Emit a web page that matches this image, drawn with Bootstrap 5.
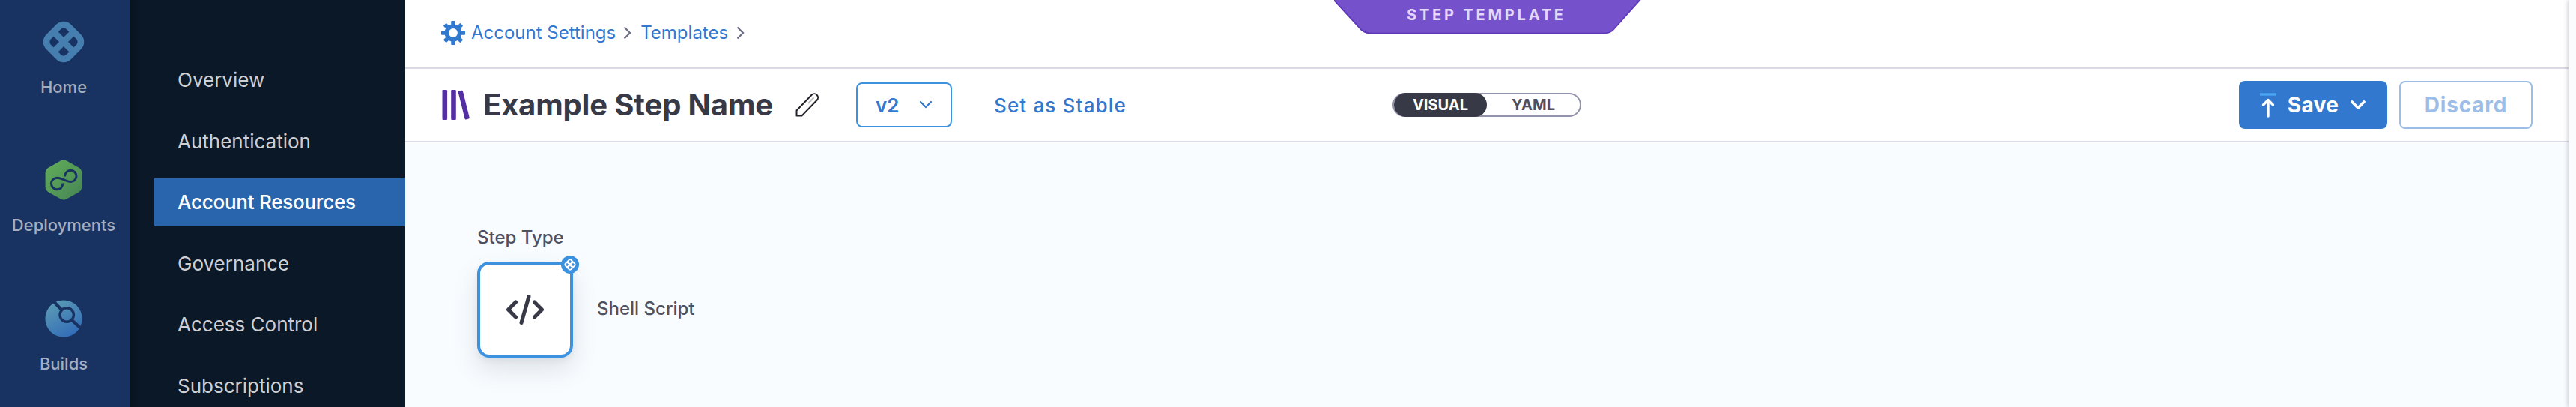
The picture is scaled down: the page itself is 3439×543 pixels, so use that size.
<!DOCTYPE html>
<html lang="en">
<head>
<meta charset="utf-8">
<title>Example Step Name</title>
<link href="https://cdn.jsdelivr.net/npm/bootstrap@5.3.0/dist/css/bootstrap.min.css" rel="stylesheet">
<style>
body{font-family:Inter,"Liberation Sans",sans-serif;font-optical-sizing:none;background:#fff;overflow:hidden;height:543px}
a{text-decoration:none}
svg{display:block;flex:none}
.rail{width:173px;padding-right:3px;background:#183361;z-index:1}
.rail a{height:184.4px;padding-top:26px;color:#a3adc0;font-size:22px;font-weight:500;line-height:28px}
.rail .glyph{height:60px;margin-bottom:16px}
.side{width:368px;background:linear-gradient(90deg,#08131f,#0a1828 16px);padding:74px 0 0 32px}
.side a{flex:none;height:65px;margin-bottom:16.6px;padding-left:32px;color:#cecfd2;font-size:26px;line-height:65px;border-radius:4px 0 0 4px}
.side a.active{background:#2865ac;color:#fff;font-weight:500;letter-spacing:-.25px}
.crumbs{height:92px;border-bottom:2px solid #d9dae5;padding:0 0 3px 48px;font-size:24px}
.crumbs a{color:#3278cf}
.ribbon{left:1240px;top:0;width:410px;height:46px;color:#e4d7fc;font-size:20px;font-weight:700;letter-spacing:3.8px}
.ribbon svg{position:absolute;left:0;top:0}
.ribbon span{position:absolute;left:97px;top:5px;line-height:30px}
.tools{height:98px;border-bottom:2px solid #d9dae5;padding-left:48px;padding-right:48px}
.title{font-size:40px;font-weight:650;color:#383946;margin:0 0 0 16px;width:417px;line-height:48px;letter-spacing:-.15px}
.ver{width:128px;height:60px;border:2px solid #3d92df;border-radius:8px;color:#3278cf;font-size:26px;font-weight:600;padding:0 24px;margin-left:49px}
.stable{margin-left:56px;color:#3278cf;font-size:26px;font-weight:500;letter-spacing:1.15px;width:532px}
.toggle{width:252px;height:32px;border:2px solid #9293ab;border-radius:16px;font-size:20px;font-weight:700;color:#4f5162}
.toggle .on{width:124px;height:32px;margin:-2px 0;border-radius:16px;background:#383946;color:#fff}
.act{height:64px;border-radius:8px;font-size:28px;font-weight:700;letter-spacing:.4px}
.save{width:198px;background:#3278cf;color:#fff;padding:0 28px}
.discard{width:178px;border:2px solid #9bbde8;color:#9bbde8;background:#fff;margin-left:16px;font-weight:650;letter-spacing:.8px}
.canvas{background:#f8fcff;padding:111px 0 0 96px;color:#4f5162;font-size:24px;font-weight:500}
.steplabel{line-height:32px;margin-bottom:16px}
.tile{width:128px;height:128px;border:4px solid #3d92df;border-radius:16px;background:#fff;box-shadow:0 16px 32px rgba(96,97,112,.16),0 4px 8px rgba(40,41,61,.06)}
.tile .pin{position:absolute;right:-12px;top:-12px}
.edge{width:10px;background:#fafbfc;box-shadow:0 0 6px rgba(40,41,61,.3);z-index:2}
</style>
<script src="https://cdn.jsdelivr.net/npm/bootstrap@5.3.0/dist/js/bootstrap.bundle.min.js"></script>
</head>
<body class="d-flex">
<nav class="rail flex-shrink-0 overflow-hidden">
  <a href="#" class="d-flex flex-column align-items-center">
    <span class="glyph d-flex align-items-center"><svg width="60" height="60" viewBox="0 0 60 60" fill="none" stroke="#477eb0" stroke-width="8.6"><rect x="11" y="11" width="38" height="38" rx="9.5" transform="rotate(45 30 30)"/><path d="M16.5 16.5l27 27M43.5 16.5l-27 27"/></svg></span>
    <span>Home</span></a>
  <a href="#" class="d-flex flex-column align-items-center">
    <span class="glyph d-flex align-items-center"><svg width="50" height="54" viewBox="0 0 50 54"><defs><linearGradient id="hexfill" x1="0" y1="0" x2="1" y2="1"><stop offset="0" stop-color="#62ae59"/><stop offset="1" stop-color="#468456"/></linearGradient></defs><path d="M21 1.5q4-2.2 8 0l16 9q4 2.3 4.4 7v19q-.4 4.700-4.400 7l-16 9q-4 2.200-8 0l-16-9q-4-2.300-4.400-7v-19q.4-4.700 4.400-7z" fill="url(#hexfill)"/><path d="M26.500 22.500C26.500 18 30 14.300 34.300 14.300c4.600 0 7.700 3.700 7.700 7.700s-3.100 7.600-7.700 7.600c-5.600 0-11.600-5.400-17.800-5.400-4.600 0-8 3.600-8 7.900s3.300 7.700 7.700 7.700c4.500 0 7.600-3.300 7.600-8.200" fill="none" stroke="#183361" stroke-width="3"/></svg></span>
    <span>Deployments</span></a>
  <a href="#" class="d-flex flex-column align-items-center">
    <span class="glyph d-flex align-items-center"><svg width="50" height="50" viewBox="0 0 50 50"><defs><linearGradient id="discfill" x1=".15" y1=".1" x2=".7" y2="1"><stop offset="0" stop-color="#5a99b4"/><stop offset="1" stop-color="#326cb8"/></linearGradient></defs><circle cx="25" cy="25" r="24.600" fill="url(#discfill)"/><g fill="none" stroke="#183361"><circle cx="29.200" cy="20" r="9.200" stroke-width="3.400"/><path d="M22.500 13.500L10.500 1M36 27l13 12" stroke-width="4.200"/></g></svg></span>
    <span>Builds</span></a>
</nav>
<nav class="side flex-shrink-0 overflow-hidden nav flex-column flex-nowrap">
  <a href="#">Overview</a><a href="#">Authentication</a><a href="#" class="active">Account Resources</a><a href="#">Governance</a><a href="#">Access Control</a><a href="#">Subscriptions</a>
</nav>
<main class="flex-grow-1 d-flex flex-column position-relative">
  <header class="crumbs d-flex align-items-center">
    <svg width="32" height="32" viewBox="-16 -16 32 32" fill="#3278cf"><circle r="8.700" fill="none" stroke="#3278cf" stroke-width="5.600"/><g id="teeth"><rect x="-2.800" y="-16" width="5.600" height="6.500" rx="1"/><rect x="-2.800" y="9.500" width="5.600" height="6.500" rx="1"/><rect x="-16" y="-2.800" width="6.500" height="5.600" rx="1"/><rect x="9.500" y="-2.800" width="6.500" height="5.600" rx="1"/></g><use href="#teeth" transform="rotate(45)"/></svg>
    <a href="#" class="ms-2">Account Settings</a>
    <svg style="margin-left:10px" width="11" height="18" viewBox="0 0 11 18" fill="none" stroke="#6b6d85" stroke-width="2.200"><path d="M1.500 1.500L9 9l-7.500 7.500"/></svg>
    <a href="#" style="margin-left:12px">Templates</a>
    <svg style="margin-left:11px" width="11" height="18" viewBox="0 0 11 18" fill="none" stroke="#6b6d85" stroke-width="2.200"><path d="M1.500 1.500L9 9l-7.500 7.500"/></svg>
  </header>
  <div class="ribbon position-absolute"><svg width="410" height="46" viewBox="0 0 410 46"><path d="M-4-4L36 39.500Q41.500 44.600 49 44.600H361Q368.500 44.600 373 39.500L412-4z" fill="#7551cc" stroke="#5f38b8" stroke-width="1.800"/></svg><span>STEP TEMPLATE</span></div>
  <section class="tools d-flex align-items-center">
    <svg width="40" height="40" viewBox="0 0 40 40" fill="#532fa3"><rect x="1.500" y="0" width="6.600" height="40" rx="1.300"/><rect x="13.200" y="0" width="6.600" height="40" rx="1.300"/><rect x="27" y=".6" width="6.400" height="39" rx="1.300" transform="rotate(-14 30.200 20)"/></svg>
    <h1 class="title text-nowrap">Example Step Name</h1>
    <svg width="32" height="32" viewBox="0 0 32 32" fill="none" stroke="#22222a" stroke-width="2"><path d="M1.500 23.500L21.600 2.800a4.800 4.800 0 0 1 7 7L8.500 30.500H1.500z" stroke-linejoin="round"/><path d="M17 14l7.500-7.700" stroke="#bbb"/></svg>
    <button class="ver bg-white d-flex align-items-center justify-content-between"><span>v2</span><svg width="18" height="12" viewBox="0 0 18 12" fill="none" stroke="#3278cf" stroke-width="2.200" stroke-linecap="round"><path d="M2 2l7 7 7-7"/></svg></button>
    <a href="#" class="stable text-nowrap">Set as Stable</a>
    <div class="toggle d-flex text-center align-items-center"><span class="on d-flex align-items-center justify-content-center">VISUAL</span><span class="flex-fill">YAML</span></div>
    <button class="act save ms-auto border-0 d-flex align-items-center justify-content-between"><svg width="22" height="34" viewBox="0 0 22 34" fill="none" stroke="#fff" stroke-width="3.400" stroke-linecap="round" stroke-linejoin="round"><path d="M0 3h22" stroke="#4aa5f0" stroke-linecap="butt"/><path d="M11 32V11M4.500 17l6.500-6.500 6.500 6.500"/></svg><span>Save</span><svg width="22" height="16" viewBox="0 0 22 16" fill="none" stroke="#fff" stroke-width="3.800" stroke-linecap="round" stroke-linejoin="round"><path d="M3 4l8 8 8-8"/></svg></button>
    <button class="act discard">Discard</button>
  </section>
  <section class="canvas flex-grow-1">
    <div class="steplabel">Step Type</div>
    <div class="d-flex align-items-center"><div class="tile position-relative d-flex align-items-center justify-content-center">
      <svg width="52" height="44" viewBox="0 0 52 44" fill="none" stroke="#383946" stroke-width="5" stroke-linecap="round" stroke-linejoin="round"><path d="M13.500 12L3.500 22l10 10M38.500 12l10 10-10 10M31 4.500l-10 35"/></svg>
      <svg class="pin" width="24" height="24" viewBox="0 0 24 24"><circle cx="12" cy="12" r="12" fill="#3d92df"/><rect x="5.700" y="5.700" width="12.600" height="12.600" rx="3.600" transform="rotate(45 12 12)" fill="#fff"/><g fill="#3d92df"><rect x="-1.600" y="-1.600" width="3.200" height="3.200" rx=".7" transform="translate(12 8) rotate(45)"/><rect x="-1.600" y="-1.600" width="3.200" height="3.200" rx=".7" transform="translate(12 16) rotate(45)"/><rect x="-1.600" y="-1.600" width="3.200" height="3.200" rx=".7" transform="translate(8 12) rotate(45)"/><rect x="-1.600" y="-1.600" width="3.200" height="3.200" rx=".7" transform="translate(16 12) rotate(45)"/></g></svg>
    </div><span style="margin-left:32px;margin-top:-2px">Shell Script</span></div>
  </section>
</main>
<aside class="edge flex-shrink-0"></aside>
</body>
</html>
